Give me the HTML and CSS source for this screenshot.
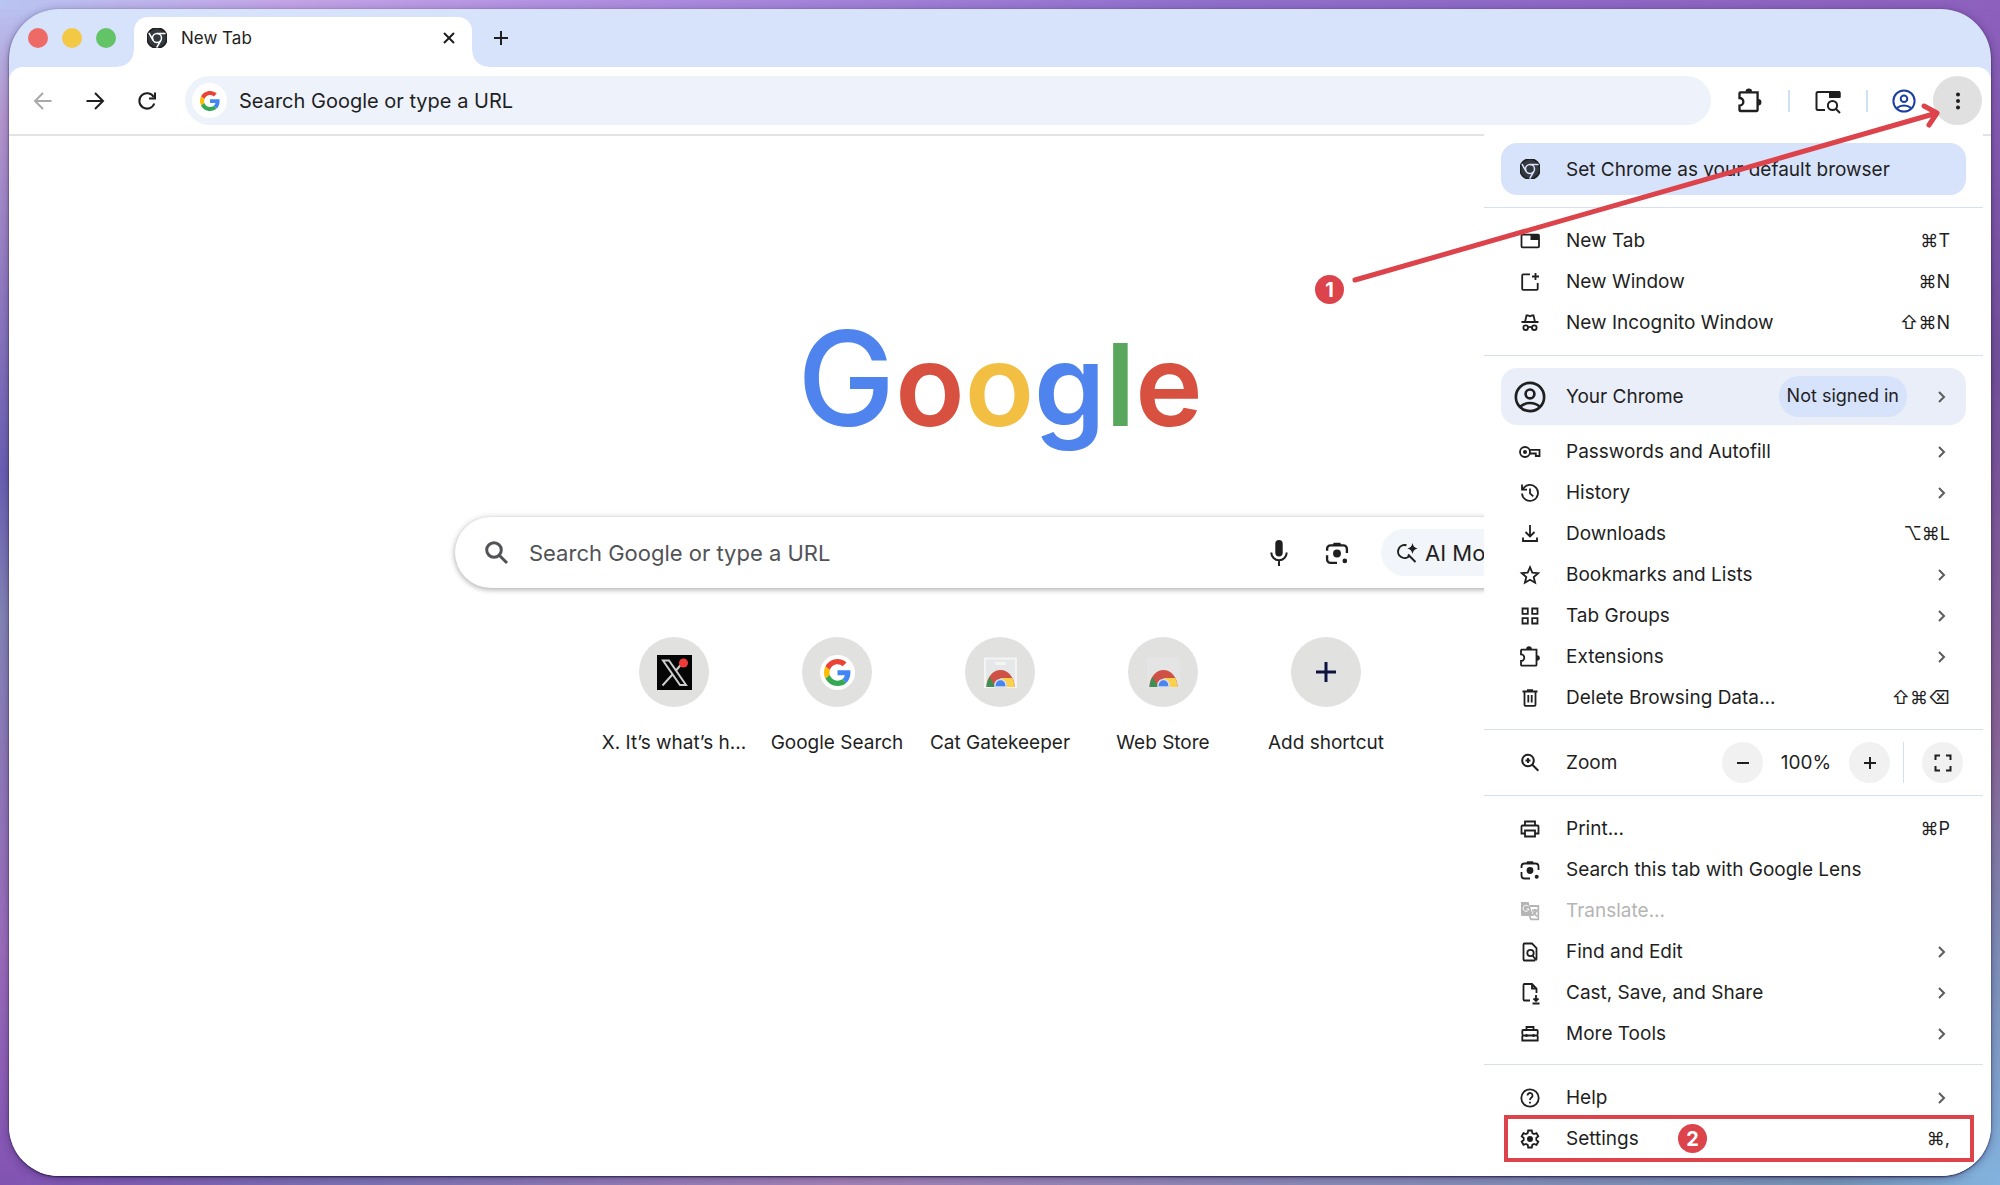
FILE: index.html
```html
<!DOCTYPE html>
<html lang="en">
<head>
<meta charset="utf-8">
<title>New Tab</title>
<link rel="stylesheet" href="styles.css">
</head>
<body>
<svg class="defs" aria-hidden="true">
  <symbol id="chrome" viewBox="0 0 24 24"><circle cx="12" cy="12" r="12" fill="#34383f"/><g fill="none" stroke="var(--icon-bg, #fff)" stroke-width="1.8"><circle cx="12" cy="12" r="5.400"/><path d="M12 6.600h10.300M7.300 14.700L2.200 5.900M16.700 14.700L11.600 23.500"/></g></symbol>
  <symbol id="g" viewBox="0 0 48 48"><path fill="#EA4335" d="M24 9.5c3.54 0 6.71 1.22 9.21 3.6l6.85-6.85C35.9 2.38 30.47 0 24 0 14.62 0 6.51 5.38 2.56 13.22l7.98 6.19C12.43 13.72 17.74 9.5 24 9.5z"/><path fill="#4285F4" d="M46.98 24.55c0-1.57-.15-3.09-.38-4.55H24v9.02h12.94c-.58 2.96-2.26 5.48-4.78 7.18l7.73 6c4.51-4.18 7.09-10.36 7.09-17.65z"/><path fill="#FBBC05" d="M10.53 28.59c-.48-1.45-.76-2.99-.76-4.59s.27-3.14.76-4.59l-7.98-6.19C.92 16.46 0 20.12 0 24c0 3.88.92 7.54 2.56 10.78l7.97-6.19z"/><path fill="#34A853" d="M24 48c6.48 0 11.93-2.13 15.89-5.81l-7.73-6c-2.15 1.45-4.92 2.3-8.16 2.3-6.26 0-11.57-4.22-13.47-9.91l-7.98 6.19C6.51 42.62 14.62 48 24 48z"/></symbol>
  <symbol id="puzzle" viewBox="0 0 24 24"><path d="M3 4.600H18.500V19.800a.8.8 0 0 1-.8.8H3.800a.8.8 0 0 1-.8-.8V16a3.200 3.200 0 0 0 0-6.600V5.400a.8.8 0 0 1 .8-.8z"/><path class="solid" d="M8.200 4a2.800 2.800 0 0 1 5.600 0zM19 10.200a2.800 2.800 0 0 1 0 5.600z"/></symbol>
  <symbol id="person" viewBox="0 0 24 24"><circle cx="12" cy="12" r="10.600"/><circle cx="12" cy="9.700" r="3.300"/><path d="M4.800 19.200c4-3.600 10.400-3.600 14.400 0"/></symbol>
  <symbol id="lens" viewBox="0 0 24 24"><path d="M3.500 10V8.500a3 3 0 0 1 3-3h11a3 3 0 0 1 3 3V12M3.500 14v3.500a3 3 0 0 0 3 3H12"/><circle class="solid" cx="12" cy="12.500" r="3.400"/><circle class="solid" cx="18.700" cy="18.800" r="2"/><path class="solid" d="M8 5.500l1.200-2.300h5.600L16 5.500z"/></symbol>
  <symbol id="chevron" viewBox="0 0 16 16"><path d="M5 3l5 5-5 5"/></symbol>
  <symbol id="store" viewBox="0 0 35 35"><path d="M2 3.500h31V32H2z" fill="var(--bag)" stroke="var(--bag-edge)"/><rect x="12" y="7" width="11" height="3" rx="1" fill="var(--bag-edge)"/><path d="M3.500 32a14 17 0 0 1 28 0z" fill="#cf5145"/><path d="M3.500 32A14 17 0 0 1 6.500 22L12.500 32z" fill="#3f8f52"/><path d="M17.500 23H29.300A14 17 0 0 1 31.500 32H17.500z" fill="#fbd04b"/><path d="M12 32v-2a5.500 5.500 0 0 1 11 0v2z" fill="#4a85ee" stroke="#d5def0" stroke-width="1.500"/></symbol>
</svg>

<div class="window">
  <header class="tabstrip">
    <div class="lights"><span class="light red"></span><span class="light yellow"></span><span class="light green"></span></div>
    <div class="tab">
      <svg class="tab-icon"><use href="#chrome"/></svg>
      <span class="tab-title">New Tab</span>
      <button class="icon-btn" aria-label="Close tab"><svg class="i24" viewBox="0 0 24 24"><path d="M7 7l10 10M17 7L7 17"/></svg></button>
    </div>
    <button class="icon-btn new-tab" aria-label="New tab"><svg class="i24" viewBox="0 0 24 24"><path d="M12 5v14M5 12h14"/></svg></button>
  </header>

  <div class="toolbar">
    <div class="nav-buttons">
      <button class="icon-btn dim" aria-label="Back"><svg class="i24" viewBox="0 0 24 24"><path d="M20.500 12H4M12 4l-8 8 8 8"/></svg></button>
      <button class="icon-btn" aria-label="Forward"><svg class="i24" viewBox="0 0 24 24"><path d="M3.500 12H20M12 4l8 8-8 8"/></svg></button>
      <button class="icon-btn" aria-label="Reload"><svg class="i24" viewBox="0 0 24 24"><path d="M19.300 14.500a7.700 7.700 0 1 1-.6-6.500M20 3.500v6h-6"/></svg></button>
    </div>
    <label class="omnibox">
      <span class="g-chip"><svg><use href="#g"/></svg></span>
      <input type="text" placeholder="Search Google or type a URL" aria-label="Address">
    </label>
    <div class="actions">
      <button class="icon-btn" aria-label="Extensions"><svg class="i28"><use href="#puzzle"/></svg></button>
      <span class="bar"></span>
      <button class="icon-btn" aria-label="Search tabs"><svg class="i28" viewBox="0 0 28 28"><path d="M11 23H4a1.500 1.500 0 0 1-1.500-1.500V6.500A1.500 1.500 0 0 1 4 5h20.500a1 1 0 0 1 1 1v4"/><path class="solid" d="M15 4h10a1.500 1.500 0 0 1 1.500 1.500V11H15z"/><circle cx="18.500" cy="18.500" r="4.600"/><path d="M22 22l4 4"/></svg></button>
      <span class="bar"></span>
      <button class="icon-btn profile" aria-label="Profile"><svg class="i24"><use href="#person"/></svg></button>
      <button class="icon-btn more" aria-label="Menu"><svg class="i24" viewBox="0 0 24 24"><g class="solid"><circle cx="12" cy="5.500" r="2"/><circle cx="12" cy="12" r="2"/><circle cx="12" cy="18.500" r="2"/></g></svg></button>
    </div>
  </div>

  <main class="page">
    <h1 class="logo"><span class="b">G</span><span class="r">o</span><span class="y">o</span><span class="b">g</span><span class="gr">l</span><span class="r">e</span></h1>
    <form class="search">
      <svg class="i28 glass" viewBox="0 0 28 28"><circle cx="11" cy="11" r="7.300"/><path d="M16.500 16.500l7.500 7.500"/></svg>
      <input type="text" placeholder="Search Google or type a URL" aria-label="Search">
      <button type="button" class="icon-btn" aria-label="Voice search"><svg class="i28" viewBox="0 0 28 28"><rect class="solid" x="10.300" y="1" width="7.400" height="16.500" rx="3.700"/><path d="M6.300 13.500a7.700 7.700 0 0 0 15.400 0M14 21v6"/></svg></button>
      <button type="button" class="icon-btn" aria-label="Image search"><svg class="i28"><use href="#lens"/></svg></button>
      <button type="button" class="ai"><svg class="i24" viewBox="0 0 24 24"><path d="M11.500 4.300A6.500 6.500 0 1 0 14.600 14.600M13 13.500l7.500 7.500"/><path class="solid" d="M17.500 2q.8 4.700 5 5.500-4.200.8-5 5.500-.8-4.700-5-5.500 4.200-.8 5-5.500z"/></svg>AI Mode</button>
    </form>
    <nav class="shortcuts">
      <a href="#"><span class="disc"><svg class="i35" viewBox="0 0 35 35"><path d="M0 0h35v35H0z" fill="#050505"/><path d="M6 5.500h6L29 30h-6zM27 6L19 15.500M15 20L5.500 30.500" fill="none" stroke="#ccc" stroke-width="2"/><circle cx="26.500" cy="8" r="4.500" fill="#f03a3a"/></svg></span><span class="name">X. It’s what’s h...</span></a>
      <a href="#"><span class="disc"><span class="g-chip"><svg class="big"><use href="#g"/></svg></span></span><span class="name">Google Search</span></a>
      <a href="#"><span class="disc"><svg class="i35"><use href="#store"/></svg></span><span class="name">Cat Gatekeeper</span></a>
      <a href="#"><span class="disc"><svg class="i35 plain"><use href="#store"/></svg></span><span class="name">Web Store</span></a>
      <a href="#"><span class="disc add"><svg class="i24" viewBox="0 0 24 24"><path d="M12 2v20M2 12h20"/></svg></span><span class="name">Add shortcut</span></a>
    </nav>
  </main>

  <nav class="menu">
    <button class="row card promo"><svg class="chrome-mark"><use href="#chrome"/></svg><span class="label">Set Chrome as your default browser</span></button>
    <div class="group">
      <button class="row"><svg viewBox="0 0 24 24"><rect x="3.500" y="5.700" width="17.500" height="12.600" rx="1"/><path class="solid" d="M12.500 5.500H21V11h-8.500z"/></svg><span class="label">New Tab</span><kbd>⌘T</kbd></button>
      <button class="row"><svg viewBox="0 0 24 24"><path d="M12 4.300H5.200a1 1 0 0 0-1 1V18.800a1 1 0 0 0 1 1H18.700a1 1 0 0 0 1-1V13M17.500 3v7M14 6.500h7"/></svg><span class="label">New Window</span><kbd>⌘N</kbd></button>
      <button class="row"><svg viewBox="0 0 24 24"><path d="M3.500 11h17M7 11l1.500-6.500h1.500l2 .8 2-.8h1.500L17 11M10 16.500q2-1.200 4 0"/><circle cx="7.700" cy="16.700" r="2.300"/><circle cx="16.300" cy="16.700" r="2.300"/></svg><span class="label">New Incognito Window</span><kbd>⇧⌘N</kbd></button>
    </div>
    <button class="row card account"><svg class="avatar"><use href="#person"/></svg><span class="label">Your Chrome</span><span class="status">Not signed in</span><svg class="chev"><use href="#chevron"/></svg></button>
    <div class="group after-card">
      <button class="row"><svg viewBox="0 0 24 24"><circle cx="7" cy="12" r="5"/><circle class="solid" cx="7" cy="12" r="2"/><path d="M11.500 9.800H21.500V16h-3.700v-2.500h-6.200"/></svg><span class="label">Passwords and Autofill</span><svg class="chev"><use href="#chevron"/></svg></button>
      <button class="row"><svg viewBox="0 0 24 24"><path d="M5 8a8 8 0 1 1-1 4.500M4 3.500V8.600H9M12 7.500V12.300l3.300 3"/></svg><span class="label">History</span><svg class="chev"><use href="#chevron"/></svg></button>
      <button class="row"><svg viewBox="0 0 24 24"><path d="M12 3v11.500M7.500 10l4.500 4.500L16.500 10M5 15.500V19h14v-3.500"/></svg><span class="label">Downloads</span><kbd>⌥⌘L</kbd></button>
      <button class="row"><svg viewBox="0 0 24 24"><path d="M12 4.200l2.300 5.400 5.900.5-4.500 3.900 1.400 5.700-5.100-3-5.100 3 1.400-5.700L3.800 10.100l5.900-.5z"/></svg><span class="label">Bookmarks and Lists</span><svg class="chev"><use href="#chevron"/></svg></button>
      <button class="row"><svg viewBox="0 0 24 24"><path d="M4.500 4.500h5.300v5.300H4.500zM14.200 4.500h5.300v5.300h-5.300zM4.500 14.200h5.300v5.300H4.500zM14.200 14.200h5.300v5.300h-5.300z"/></svg><span class="label">Tab Groups</span><svg class="chev"><use href="#chevron"/></svg></button>
      <button class="row"><svg><use href="#puzzle"/></svg><span class="label">Extensions</span><svg class="chev"><use href="#chevron"/></svg></button>
      <button class="row"><svg viewBox="0 0 24 24"><path d="M4.500 5.500h15M9 4.200h6M6.500 6v12.800a1 1 0 0 0 1 1h9a1 1 0 0 0 1-1V6M10.300 9v7.500M13.700 9v7.500"/></svg><span class="label">Delete Browsing Data...</span><kbd>⇧⌘⌫</kbd></button>
    </div>
    <div class="zoom">
      <svg viewBox="0 0 24 24"><circle cx="10" cy="9.500" r="5.800"/><path d="M14.300 13.800l6 6M10 7v5M7.500 9.500h5"/></svg><span class="label">Zoom</span>
      <button class="round" aria-label="Zoom out"><svg viewBox="0 0 24 24"><path d="M6 12h12"/></svg></button>
      <output>100%</output>
      <button class="round" aria-label="Zoom in"><svg viewBox="0 0 24 24"><path d="M6 12h12M12 6v12"/></svg></button>
      <span class="rule"></span>
      <button class="round" aria-label="Full screen"><svg viewBox="0 0 24 24"><path d="M4.500 9V4.500H9M15 4.500h4.500V9M19.500 15v4.500H15M9 19.500H4.500V15"/></svg></button>
    </div>
    <div class="group">
      <button class="row"><svg viewBox="0 0 24 24"><path d="M7 8.500V4.500h10v4M7 16.500H3.500V9.500a1 1 0 0 1 1-1h15a1 1 0 0 1 1 1v7H17M7 13.500h10v6H7z"/></svg><span class="label">Print...</span><kbd>⌘P</kbd></button>
      <button class="row"><svg><use href="#lens"/></svg><span class="label">Search this tab with Google Lens</span></button>
      <button class="row off" disabled><svg viewBox="0 0 24 24"><path class="solid" d="M3 3h7.500l4.500 14H4.500A1.500 1.500 0 0 1 3 15.500z"/><path d="M12 7h8.300v13.300H13L11.500 17M14 11.500h6M17 10v1.500M18.500 11.500q-1 3-4 5M15 13l4 4.500"/><path class="cut" d="M10.500 7.500A3 3 0 1 0 11 10H8.500"/></svg><span class="label">Translate...</span></button>
      <button class="row"><svg viewBox="0 0 24 24"><path d="M18.500 19.500V8L14 3.500H6.500a1 1 0 0 0-1 1v15a1 1 0 0 0 1 1H17M14.500 15.500l4 5"/><circle cx="12.500" cy="13" r="3.200"/></svg><span class="label">Find and Edit</span><svg class="chev"><use href="#chevron"/></svg></button>
      <button class="row"><svg viewBox="0 0 24 24"><path d="M12 19.500H6.500a1 1 0 0 1-1-1V4a1 1 0 0 1 1-1H14l4.500 4.500V12M14 3v4.500h4.500M18 14v6M15.500 17.500L18 20l2.500-2.500M14.500 22.500h7"/></svg><span class="label">Cast, Save, and Share</span><svg class="chev"><use href="#chevron"/></svg></button>
      <button class="row"><svg viewBox="0 0 24 24"><path d="M8.500 8V5h7v3M4.300 12.500V9a1 1 0 0 1 1-1h13.400a1 1 0 0 1 1 1v3.500M4 13.500h16M4.300 13.500v5h15.400v-5M8.500 12v3M15.500 12v3"/></svg><span class="label">More Tools</span><svg class="chev"><use href="#chevron"/></svg></button>
    </div>
    <div class="group">
      <button class="row"><svg viewBox="0 0 24 24"><circle cx="12" cy="12" r="8.700"/><path d="M9.500 9.500a2.500 2.500 0 1 1 4 2q-1.500 1-1.500 2.500M12 15.700v1.800"/></svg><span class="label">Help</span><svg class="chev"><use href="#chevron"/></svg></button>
      <button class="row settings"><svg viewBox="0 0 24 24"><path d="M10.200 3.500h3.600l.5 2.600 1.700 1 2.500-.9 1.800 3.100-2 1.700v2l2 1.700-1.800 3.100-2.500-.9-1.700 1-.5 2.600h-3.600l-.5-2.600-1.700-1-2.500.9-1.800-3.100 2-1.700v-2l-2-1.700 1.800-3.100 2.500.9 1.700-1z"/><circle class="solid" cx="12" cy="12" r="3"/></svg><span class="label">Settings</span><kbd>⌘,</kbd></button>
    </div>
    <span class="highlight"></span>
    <span class="badge two">2</span>
  </nav>

  <svg class="arrow" viewBox="0 0 600 190" aria-hidden="true"><path d="M5 178L587 11M574 4l13 7-8 12"/></svg>
  <span class="badge one">1</span>
</div>
</body>
</html>
```
FILE: styles.css
```css
* { box-sizing: border-box; }

body {
  margin: 0;
  padding: 9px;
  min-height: 100vh;
  font-family: Inter, "Liberation Sans", sans-serif;
  font-size: 19px;
  color: #1f1f1f;
  background:
    linear-gradient(90deg, #b9c4f2, #c3a3e6 15%, #b291e2 28%, #9070cc 60%, #8d60bd) top / 100% 9px no-repeat,
    linear-gradient(90deg, #8253b2, #7d74b4 18%, #a583b8 42%, #8f8ab8 62%, #7896b8 92%, #82b3de) bottom / 100% 9px no-repeat,
    linear-gradient(#b9c4f2, #b596cf 10%, #6a5fb3 40%, #8484b6 52%, #9b6cbb 80%, #8253b2) left / 50% 100% no-repeat,
    linear-gradient(#8d60bd, #74509c 30%, #8a6596 62%, #7e8db6 80%, #82b3de) right / 50% 100% no-repeat;
}

button, input { font: inherit; color: inherit; border: 0; background: none; padding: 0; margin: 0; }
input { outline: 0; min-width: 0; flex: 1; }
svg { display: block; flex: none; fill: none; stroke: currentColor; stroke-width: 2; }
.solid { fill: currentColor; stroke: none; }
.defs { position: absolute; width: 0; height: 0; }
.i24 { width: 24px; height: 24px; }
.i28 { width: 28px; height: 28px; }
.i35 { width: 35px; height: 35px; }

.window {
  position: relative;
  display: flex;
  flex-direction: column;
  min-height: calc(100vh - 18px);
  border-radius: 50px;
  overflow: hidden;
  background: #d7e2fb;
  box-shadow: 0 1px 2px rgba(30, 15, 60, .8), 0 2px 10px rgba(30, 20, 70, .4);
}

.tabstrip { display: flex; align-items: center; height: 58px; padding-left: 19px; }
.lights { display: flex; gap: 14px; width: 106px; }
.light { width: 20px; height: 20px; border-radius: 50%; }
.red { background: #ed6a66; }
.yellow { background: #f3c845; }
.green { background: #62c466; }

.tab {
  position: relative;
  align-self: flex-end;
  display: flex;
  align-items: center;
  width: 338px;
  height: 50px;
  padding: 0 11px 8px 13px;
  border-radius: 14px 14px 0 0;
  background: #fff;
  font-size: 17px;
}
.tab::before, .tab::after {
  content: "";
  position: absolute;
  bottom: 0;
  width: 16px;
  height: 16px;
}
.tab::before { right: 100%; background: radial-gradient(circle at 0 0, transparent 15px, #fff 16px); }
.tab::after { left: 100%; background: radial-gradient(circle at 100% 0, transparent 15px, #fff 16px); }
.tab-icon { width: 20px; height: 20px; margin-right: 14px; }
.tab-title { flex: 1; }
.icon-btn { display: grid; place-items: center; }
.new-tab { margin-left: 17px; }

.toolbar {
  display: flex;
  align-items: center;
  height: 69px;
  padding-right: 9px;
  background: #fff;
  border-bottom: 2px solid #e2e3e6;
  border-radius: 14px 14px 0 0;
}
.nav-buttons { display: flex; gap: 28px; padding: 0 26px 0 22px; }
.dim { color: #a9a9a9; }
.omnibox {
  flex: 1;
  display: flex;
  align-items: center;
  gap: 12px;
  height: 49px;
  padding-left: 7px;
  border-radius: 25px;
  background: #edf2fb;
  font-size: 20px;
}
.omnibox input::placeholder { color: #1f1f1f; opacity: 1; }
.g-chip { display: grid; place-items: center; width: 35px; height: 35px; border-radius: 50%; background: #fff; }
.g-chip svg { width: 20px; height: 20px; stroke: none; }
.g-chip .big { width: 27px; height: 27px; }
.actions { display: flex; align-items: center; gap: 24px; padding-left: 25px; }
.bar { width: 2px; height: 22px; background: #cfe0f8; }
.profile { color: #1b3fa5; }
.more { width: 49px; height: 49px; margin-left: -7px; border-radius: 50%; background: #e0e0e0; }

.page { flex: 1; display: flex; flex-direction: column; align-items: center; background: #fff; }
.logo { margin: 163px 0 0; font-size: 131px; font-weight: 500; line-height: 160px; white-space: nowrap; }
.logo span + span { font-size: 114px; font-weight: 600; line-height: 0; }
.b { color: #4f83ee; }
.r { color: #d8503f; }
.y { color: #f3bf42; }
.gr { color: #59a75c; }

.search {
  display: flex;
  align-items: center;
  width: 55%;
  height: 71px;
  margin-top: 58px;
  padding: 0 12px 0 28px;
  border-radius: 36px;
  background: #fff;
  box-shadow: 0 1px 6px rgba(32, 33, 36, .3), 0 2px 4px rgba(32, 33, 36, .12);
}
.search input { margin-left: 18px; font-size: 22px; }
.search input::placeholder { color: #515357; opacity: 1; }
.glass { color: #515357; stroke-width: 3; }
.search .icon-btn { margin-right: 30px; stroke-width: 3; }
.ai {
  display: flex;
  align-items: center;
  gap: 6px;
  height: 47px;
  width: 152px;
  padding-left: 14px;
  border-radius: 24px;
  background: #f2f5f9;
  font-size: 22px;
}

.shortcuts { display: grid; grid-template-columns: repeat(5, 163px); margin-top: 49px; --bag: #e6e7e8; --bag-edge: #f4f4f4; }
.shortcuts a { display: flex; flex-direction: column; align-items: center; gap: 25px; color: inherit; text-decoration: none; white-space: nowrap; }
.disc { display: grid; place-items: center; width: 70px; height: 70px; border-radius: 50%; background: #e1e1e0; }
.disc svg { stroke: none; }
.disc .plain { --bag: #e4e4e5; --bag-edge: #e4e4e5; }
.disc.add svg { stroke: #0e1240; stroke-width: 3; }
.name { line-height: 22px; }

.menu {
  position: absolute;
  top: 119px;
  right: 8px;
  width: 499px;
  padding-top: 15px;
  background: #fff;
}
.row { display: flex; align-items: center; width: 100%; height: 41px; padding: 0 33px 0 34px; text-align: left; white-space: nowrap; }
.menu svg { width: 24px; height: 24px; }
.label { flex: 1; margin-left: 24px; }
.menu .chev { width: 16px; height: 16px; color: #5c5c5c; }
kbd { font: inherit; font-size: 18px; }
.off { color: #b5b5b5; }
.cut { stroke: #fff; stroke-width: 1; }

.card { width: auto; margin: 0 17px; padding: 0 16px 0 17px; border-radius: 16px; }
.promo { width: 465px; height: 52px; margin-bottom: 12px; background: #d7e2fb; --icon-bg: #d7e2fb; }
.menu .chrome-mark { width: 20px; height: 20px; margin: 0 2px; }
.account { width: 465px; height: 57px; background: #eaeef8; }
.menu .avatar { width: 32px; height: 32px; margin: 0 -4px; }
.status { height: 41px; margin-right: 27px; padding: 0 8px; border-radius: 20px; background: #d7e2fb; font-size: 18px; line-height: 40px; }

.group { padding: 12px 0; border-top: 1px solid #d5e1ee; }
.group svg { stroke-width: 1.8; }
.menu .group .chev { stroke-width: 2; }
.card + .group.after-card { padding: 6px 0 11px; border-top: 0; }
.promo + .group { border-bottom: 1px solid #d5e1ee; margin-bottom: 12px; }
.zoom + .group { padding-bottom: 10px; }
.zoom { display: flex; align-items: center; height: 66px; padding: 0 20px 0 34px; border-top: 1px solid #d5e1ee; }
.round { display: grid; place-items: center; width: 41px; height: 41px; border-radius: 50%; background: #f1f1f1; }
.zoom output { width: 86px; text-align: center; }
.rule { width: 1px; height: 41px; margin: 0 18px 0 13px; background: #cfe0f3; }

.highlight { position: absolute; right: 9px; bottom: 9px; width: 470px; height: 47px; border: 4px solid #dc434b; }
.badge {
  position: absolute;
  display: grid;
  place-items: center;
  width: 29px;
  height: 29px;
  border-radius: 50%;
  background: #dc434b;
  color: #fff;
  font-size: 20px;
  font-weight: 700;
}
.badge.two { right: 276px; bottom: 18px; }
.badge.one { right: 647px; top: 266px; }
.arrow { position: absolute; right: 41px; top: 93px; width: 600px; height: 190px; color: #dc434b; stroke-width: 5; stroke-linecap: round; stroke-linejoin: round; }
```
